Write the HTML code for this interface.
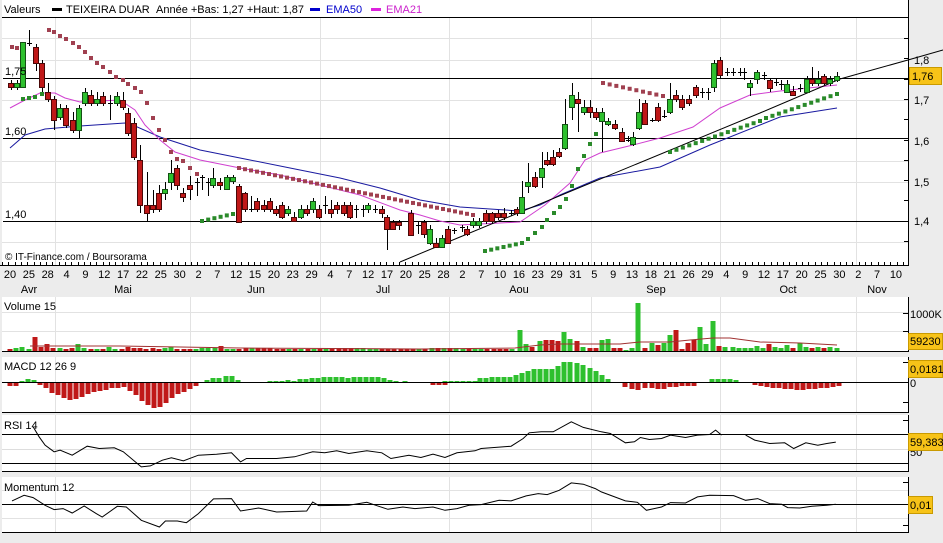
<!DOCTYPE html>
<html><head><meta charset="utf-8">
<style>
html,body{margin:0;padding:0;background:#ececec;}
body{width:943px;height:538px;overflow:hidden;font-family:"Liberation Sans",sans-serif;}
svg text{font-family:"Liberation Sans",sans-serif;font-size:11px;fill:#000;}
</style></head><body>
<svg id="s" width="943" height="538" xmlns="http://www.w3.org/2000/svg">
<rect x="0" y="0" width="943" height="538" fill="#ececec"/>
<!-- panels -->
<rect x="2" y="0" width="906" height="265" fill="#fff"/>
<rect x="2" y="297" width="906" height="54" fill="#fff"/>
<rect x="2" y="357" width="906" height="55" fill="#fff"/>
<rect x="2" y="415" width="906" height="56" fill="#fff"/>
<rect x="2" y="477" width="906" height="55" fill="#fff"/>
<g id="grid" stroke="#e2e2e2" stroke-width="1"></g>
<g id="main"></g>
<!-- legend -->
<text x="4" y="13">Valeurs</text>
<rect x="52" y="8" width="10" height="3" fill="#000"/>
<text x="66" y="13">TEIXEIRA DUAR</text>
<text x="156" y="13">Année +Bas: 1,27 +Haut: 1,87</text>
<rect x="310" y="8" width="10" height="3" fill="#0000cc"/>
<text x="326" y="13" style="fill:#0000cc">EMA50</text>
<rect x="371" y="8" width="10" height="3" fill="#dd22dd"/>
<text x="386" y="13" style="fill:#cc22cc">EMA21</text>
<line x1="2" y1="17.5" x2="908" y2="17.5" stroke="#000"/>
<text x="5" y="75">1,75</text>
<text x="5" y="135">1,60</text>
<text x="5" y="218">1,40</text>
<text x="5" y="260" style="font-size:10px">© IT-Finance.com / Boursorama</text>
<line x1="908.5" y1="0" x2="908.5" y2="266" stroke="#000"/>
<line x1="0" y1="265.5" x2="908" y2="265.5" stroke="#000"/>
<text x="914" y="64">1,8</text>
<rect x="909.5" y="67.5" width="32" height="17" fill="#f7c318" stroke="#c99a00"/>
<text x="912" y="80">1,76</text>
<text x="914" y="104">1,7</text>
<text x="914" y="145">1,6</text>
<text x="914" y="186">1,5</text>
<text x="914" y="225">1,4</text>
<g id="dates"></g>
<!-- lower panels -->
<text x="4" y="310">Volume 15</text>
<line x1="2" y1="351.5" x2="908" y2="351.5" stroke="#000"/>
<line x1="908.5" y1="297" x2="908.5" y2="352" stroke="#000"/>
<text x="910" y="318">1000K</text>
<rect x="908.5" y="333.5" width="34" height="16" fill="#f7c318" stroke="#c99a00"/>
<text x="910" y="345">59230</text>
<text x="4" y="370">MACD 12 26 9</text>
<line x1="2" y1="382.5" x2="908" y2="382.5" stroke="#000"/>
<line x1="2" y1="412.5" x2="908" y2="412.5" stroke="#000"/>
<line x1="908.5" y1="357" x2="908.5" y2="413" stroke="#000"/>
<rect x="908.5" y="360.5" width="34" height="17" fill="#f7c318" stroke="#c99a00"/>
<text x="910" y="373">0,0181</text>
<text x="910" y="387">0</text>
<line x1="2" y1="449.5" x2="908" y2="449.5" stroke="#ddd"/>
<line x1="2" y1="434.5" x2="908" y2="434.5" stroke="#000"/>
<line x1="2" y1="463.5" x2="908" y2="463.5" stroke="#000"/>
<line x1="2" y1="471.5" x2="908" y2="471.5" stroke="#000"/>
<line x1="908.5" y1="415" x2="908.5" y2="472" stroke="#000"/>
<text x="910" y="456">50</text>
<rect x="908.5" y="433.5" width="34" height="17" fill="#f7c318" stroke="#c99a00"/>
<text x="910" y="446">59,383</text>
<text x="4" y="429">RSI 14</text>
<text x="4" y="491">Momentum 12</text>
<line x1="2" y1="504.5" x2="908" y2="504.5" stroke="#000"/>
<line x1="2" y1="532.5" x2="908" y2="532.5" stroke="#000"/>
<line x1="908.5" y1="477" x2="908.5" y2="533" stroke="#000"/>
<rect x="908.5" y="496.5" width="24" height="17" fill="#f7c318" stroke="#c99a00"/>
<text x="910" y="509">0,01</text>
<g id="low"></g>
</svg>
<script>
var NS="http://www.w3.org/2000/svg";
function add(g,tag,a){var e=document.createElementNS(NS,tag);for(var k in a)e.setAttribute(k,a[k]);document.getElementById(g).appendChild(e);return e;}
// grid
[55,190,320,449,591,720,856].forEach(function(x){
 [[18,265],[297,351],[357,412],[415,471],[477,532]].forEach(function(r){add('grid','line',{x1:x+.5,y1:r[0],x2:x+.5,y2:r[1]});});
});
[38,60,100,161,182,242].forEach(function(y){add('grid','line',{x1:2,y1:y+.5,x2:908,y2:y+.5});});
[312,331].forEach(function(y){add('grid','line',{x1:2,y1:y+.5,x2:908,y2:y+.5});});
[490,518].forEach(function(y){add('grid','line',{x1:2,y1:y+.5,x2:908,y2:y+.5});});
// black horizontal lines
[78,138,221].forEach(function(y){add('main','line',{x1:3,y1:y+.5,x2:908,y2:y+.5,stroke:'#000'});});
// right ticks
for(var y=38;y<260;y+=20.3){add('main','line',{x1:904,y1:Math.round(y)+.5,x2:908,y2:Math.round(y)+.5,stroke:'#000'});}
[313,331,362,402,420,463,482,525].forEach(function(y){add('low','line',{x1:903,y1:y+.5,x2:908,y2:y+.5,stroke:'#000'});});
// bottom ticks
for(var x=2;x<908;x+=6.3){add('main','line',{x1:Math.round(x)+.5,y1:262,x2:Math.round(x)+.5,y2:266,stroke:'#000'});}
// dates
var d="20 25 28 4 9 12 17 22 25 30 2 7 12 15 20 23 29 4 7 12 17 20 25 28 2 7 10 16 23 29 31 5 9 13 18 21 26 29 4 9 12 17 20 25 30 2 7 10".split(" ");
d.forEach(function(t,i){var e=add('dates','text',{x:10+i*18.85,y:278,'text-anchor':'middle'});e.textContent=t;});
[["Avr",29],["Mai",123],["Jun",256],["Jul",383],["Aou",519],["Sep",656],["Oct",788],["Nov",877]].forEach(function(m){var e=add('dates','text',{x:m[1],y:293,'text-anchor':'middle'});e.textContent=m[0];});
function poly(g,pts,col,w){add(g,'polyline',{points:pts.map(function(p){return p.join(',')}).join(' '),fill:'none',stroke:col,'stroke-width':w||1});}
// EMA lines
poly('main',[[10,148],[25,135],[45,129],[80,126],[110,124],[125,123],[135,126],[160,137],[200,150],[250,160],[300,170],[340,178],[380,188],[420,200],[460,207],[520,211],[540,205],[560,195],[600,178],[660,167],[710,145],[760,125],[780,117],[837,108]],'#1a1aa0');
poly('main',[[10,108],[25,100],[40,93],[55,93],[65,98],[80,102],[100,101],[120,100],[135,110],[145,125],[160,140],[175,152],[200,160],[240,168],[280,175],[320,185],[360,195],[400,210],[420,215],[440,221],[460,225],[500,223],[520,222],[545,205],[570,183],[585,160],[600,153],[633,145],[660,138],[693,127],[720,108],[750,95],[780,91],[837,85]],'#d040d0');
// trend line
poly('main',[[400,262],[460,237],[760,113],[840,79],[908,60],[943,50]],'#000');
// SAR dots
function dots(pts,col){pts.forEach(function(p){add('main','rect',{x:p[0]-2,y:p[1]-2,width:4,height:4,fill:col});});}
function line(x1,y1,x2,y2,n){var r=[];for(var i=0;i<n;i++){r.push([x1+(x2-x1)*i/(n-1),y1+(y2-y1)*i/(n-1)]);}return r;}
var RED='#a04050',GRN='#2a8a2a';
dots([[12,47],[17,48]],RED);
dots([[49,30],[54,32],[60,36],[66,39],[73,43],[79,47],[85,52],[91,58],[97,63],[103,67],[110,72],[116,77],[123,80],[128,84],[135,88],[141,92],[147,103],[153,118],[159,130],[165,140],[171,152],[177,159],[183,161],[190,168],[197,174]],RED);
dots(line(239,168,473,215,40),RED);
dots(line(603,83,663,96,10),RED);
dots([[23,99],[29,98],[35,97],[42,94]],GRN);
dots(line(202,221,233,214,6),GRN);
dots(line(485,251,522,243,7),GRN);
dots([[528,239],[535,233],[542,227],[547,220],[554,213],[560,207],[566,199],[572,186],[578,169],[584,156],[590,144],[596,134]],GRN);
dots(line(670,152,760,121,15),GRN);
dots(line(766,118,837,94,12),GRN);
// candles [x,open,close,high,low]
var C=[[11,83,87,80,90],[17,87,83,80,90],[23,87,42,88,42],[29,43,43,30,46],[36,47,63,44,71],[42,63,87,60,92],[48,92,99,83,102],[54,99,120,96,130],[60,117,108,104,120],[66,108,125,105,128],[73,120,130,112,133],[79,130,108,105,138],[85,103,92,88,106],[91,95,103,90,106],[97,103,99,92,106],[103,96,103,92,106],[110,103,103,95,120],[117,103,96,92,106],[123,100,107,92,110],[128,113,133,108,136],[134,123,157,118,160],[140,160,205,145,213],[147,205,213,172,221],[153,205,209,190,213],[159,193,209,185,212],[165,193,189,182,200],[171,182,173,160,190],[177,168,185,165,190],[183,193,197,188,202],[190,185,189,176,200],[197,182,182,178,196],[202,177,177,175,190],[208,182,182,178,196],[213,185,178,168,188],[220,182,185,178,190],[227,189,177,175,190],[233,181,177,175,184],[239,186,222,184,222],[245,193,209,192,212],[251,209,209,196,212],[257,201,209,198,212],[264,205,209,200,212],[270,201,209,198,212],[276,209,213,206,216],[282,205,217,202,219],[288,213,209,206,216],[294,217,221,212,222],[301,217,209,205,219],[307,209,213,205,216],[313,209,201,198,213],[319,209,217,205,219],[325,205,205,196,214],[331,209,213,200,218],[337,205,209,202,214],[344,205,213,202,216],[350,205,217,202,219],[356,209,209,205,218],[363,209,209,205,217],[368,209,205,203,213],[375,209,209,205,213],[382,209,213,206,218],[387,217,229,215,250],[393,222,229,220,230],[399,222,225,220,230],[411,213,235,210,236],[418,225,225,222,234],[424,222,234,220,238],[430,243,229,225,245],[436,243,247,238,248],[442,247,238,235,248],[448,229,243,226,244],[454,230,230,228,234],[462,227,227,225,232],[467,229,234,226,236],[473,225,221,218,228],[479,225,221,218,228],[486,213,221,210,224],[492,213,221,212,224],[498,213,217,210,220],[504,213,217,208,220],[511,213,213,210,216],[517,209,213,207,216],[522,213,197,181,214],[528,186,182,163,193],[535,177,186,172,188],[542,177,168,152,188],[547,160,164,152,166],[553,157,164,150,166],[559,152,156,148,158],[565,148,124,99,150],[572,107,95,83,120],[578,99,103,92,132],[584,112,107,100,115],[590,107,112,100,118],[596,112,117,108,120],[602,121,112,108,152],[608,124,121,118,126],[615,124,128,120,130],[622,132,141,128,142],[628,140,140,136,142],[633,144,137,132,146],[639,128,112,99,130],[645,103,124,100,125],[652,120,120,118,122],[658,107,120,103,122],[664,116,116,110,118],[670,112,99,83,114],[676,95,99,90,102],[682,99,107,95,110],[689,99,103,95,106],[696,87,95,85,98],[702,92,92,88,98],[708,92,92,88,100],[714,87,63,60,92],[720,60,75,57,78],[727,72,72,68,76],[733,72,72,68,76],[740,72,72,68,76],[744,72,72,68,80],[750,87,83,80,96],[757,79,72,70,84],[764,75,75,72,80],[770,80,88,78,92],[776,82,82,78,86],[781,84,84,80,90],[787,92,84,80,93],[793,91,95,86,96],[800,88,88,84,92],[807,92,79,76,93],[812,79,83,67,86],[818,83,79,71,86],[824,76,83,74,85],[830,83,79,76,86],[837,80,76,72,82]];
C.forEach(function(c){
 var x=c[0],o=c[1],cl=c[2],h=c[3],l=c[4];
 add('main','line',{x1:x+.5,y1:h,x2:x+.5,y2:l,stroke:'#000'});
 if(Math.abs(o-cl)<1){add('main','line',{x1:x-2,y1:o+.5,x2:x+3,y2:o+.5,stroke:'#000'});return;}
 var up=cl<o;var t=Math.min(o,cl),b=Math.max(o,cl);
 add('main','rect',{x:x-2.5,y:t+.5,width:5,height:b-t,fill:up?'#2ec02e':'#c01818',stroke:up?'#145014':'#4a0808','stroke-width':1});
});
// volume
var V={};
[[10,2],[16,3],[22,4],[29,2],[36,14],[42,4],[48,7],[54,3],[60,3],[66,2],[73,3],[79,7],[85,3],[91,2],[97,2],[103,2],[110,4],[117,2],[123,2],[128,4],[134,3],[140,3],[147,2],[153,3],[159,2],[165,3],[171,4],[177,2],[183,2],[190,2],[197,2],[202,3],[208,3],[213,3],[220,5],[227,2],[233,2],[239,2]].forEach(function(p){V[p[0]]=p[1];});
var vb=[[520,21],[526,7],[532,4],[540,10],[546,11],[552,11],[558,10],[564,19],[570,12],[577,10],[583,4],[590,3],[596,3],[602,11],[608,12],[614,3],[620,3],[626,1],[632,3],[638,48],[645,3],[652,8],[658,6],[664,8],[670,16],[676,21],[682,2],[688,8],[694,11],[700,24],[706,7],[713,30],[719,5],[725,4],[733,4],[739,3],[745,3],[751,3],[757,5],[763,3],[769,7],[775,4],[781,3],[787,6],[793,3],[800,8],[806,4],[812,3],[818,4],[824,3],[830,4],[837,3]];
var cmap={};C.forEach(function(c){cmap[c[0]]=c[2]<c[1]||Math.abs(c[1]-c[2])<1;});
function colAt(x){var best=null,bd=99;C.forEach(function(c){var dd=Math.abs(c[0]-x);if(dd<bd){bd=dd;best=c;}});return best&&best[2]<=best[1];}
for(var x=10;x<515;x+=6.2){var xx=Math.round(x);var h=2;for(var k in V){if(Math.abs(k-xx)<3)h=V[k];}if(xx>240)h=(xx%3)?2:3;add('low','rect',{x:xx-2.5,y:351-h,width:5,height:h,fill:colAt(xx)?'#2ec02e':'#c01818'});}
vb.forEach(function(p){add('low','rect',{x:p[0]-2.5,y:351-p[1],width:5,height:p[1],fill:colAt(p[0])?'#2ec02e':'#c01818'});});
poly('low',[[30,346],[120,346],[240,348],[420,349],[515,348],[540,345],[560,344],[600,344],[620,344],[640,342],[670,342],[690,340],[713,338],[730,338],[760,342],[800,343],[837,345]],'#a03030');
// MACD
var M=[[10,-3],[16,-3],[22,1],[28,3],[34,2],[40,-2],[46,-5],[52,-10],[58,-12],[64,-15],[70,-17],[76,-16],[82,-14],[88,-11],[94,-9],[100,-8],[106,-7],[112,-5],[118,-5],[124,-4],[130,-8],[136,-12],[142,-18],[148,-22],[154,-25],[160,-24],[166,-20],[172,-15],[178,-11],[184,-9],[190,-6],[196,-3],[207,2],[213,4],[219,4],[226,6],[232,6],[238,2],[270,1],[276,1],[282,1],[288,2],[294,1],[300,3],[306,3],[312,4],[318,4],[324,5],[330,5],[336,5],[342,5],[348,4],[354,5],[360,5],[366,5],[372,5],[378,5],[384,4],[390,2],[396,1],[405,1],[433,-2],[439,-2],[445,-2],[480,4],[486,4],[492,5],[498,5],[504,5],[510,5],[516,7],[522,9],[528,11],[534,13],[540,13],[546,13],[552,13],[558,16],[564,20],[570,20],[577,19],[583,17],[590,14],[596,11],[602,7],[608,3],[625,-4],[632,-6],[638,-7],[645,-5],[652,-5],[658,-6],[664,-6],[670,-4],[676,-4],[682,-3],[688,-3],[694,-3],[712,3],[718,3],[724,3],[730,3],[736,2],[755,-2],[761,-3],[767,-4],[773,-5],[779,-5],[785,-6],[791,-6],[797,-7],[803,-7],[809,-6],[815,-6],[821,-5],[827,-5],[833,-4],[839,-3]];
for(var x=445;x<480;x+=6){M.push([x,1]);}
M.forEach(function(p){var h=p[1];add('low','rect',{x:p[0]-2.5,y:h>0?382-h:383,width:5,height:Math.abs(h),fill:h>0?'#2ec02e':'#c01818'});});
function conv(a){return a.map(function(p){return [ (p[0]/1.663).toFixed(1), (p[1]/2.993+380).toFixed(1)];});}
var R=[[55,140],[65,170],[75,195],[90,215],[100,210],[120,225],[145,198],[165,205],[190,203],[205,215],[235,260],[250,257],[270,240],[285,233],[305,242],[330,225],[360,222],[385,218],[400,245],[410,235],[460,235],[490,230],[520,215],[540,218],[560,212],[580,220],[610,212],[635,218],[650,235],[680,225],[700,232],[720,222],[740,232],[760,218],[790,212],[800,205],[850,198],[870,175],[880,158],[900,155],[920,155],[950,125],[970,142],[1000,155],[1015,160],[1040,188],[1055,185],[1065,172],[1080,178],[1100,175],[1115,165],[1140,172],[1160,165],[1180,163],[1190,150],[1200,165]];
poly('low',conv(R),'#000');
poly('low',conv([[1240,165],[1255,180],[1280,190],[1305,188],[1320,205],[1340,188],[1360,195],[1375,190],[1390,186]]),'#000');
var MO=[[20,362],[40,345],[55,352],[75,375],[90,388],[105,385],[120,398],[140,377],[160,400],[170,410],[195,378],[210,380],[235,420],[265,440],[275,422],[295,422],[310,427],[330,400],[355,356],[385,355],[400,392],[430,383],[460,395],[510,392],[520,365],[530,376],[580,375],[610,366],[625,375],[645,387],[670,380],[690,385],[720,380],[740,390],[760,385],[780,375],[800,373],[830,360],[850,362],[875,347],[895,340],[910,343],[930,330],[950,308],[970,312],[990,325],[1000,335],[1040,362],[1060,366],[1075,390],[1100,380],[1115,367],[1140,368],[1160,350],[1180,345],[1220,346],[1240,360],[1260,355],[1280,370],[1300,372],[1310,382],[1330,383],[1350,378],[1375,375],[1390,372]];
poly('low',conv(MO),'#000');
</script>
</body></html>
